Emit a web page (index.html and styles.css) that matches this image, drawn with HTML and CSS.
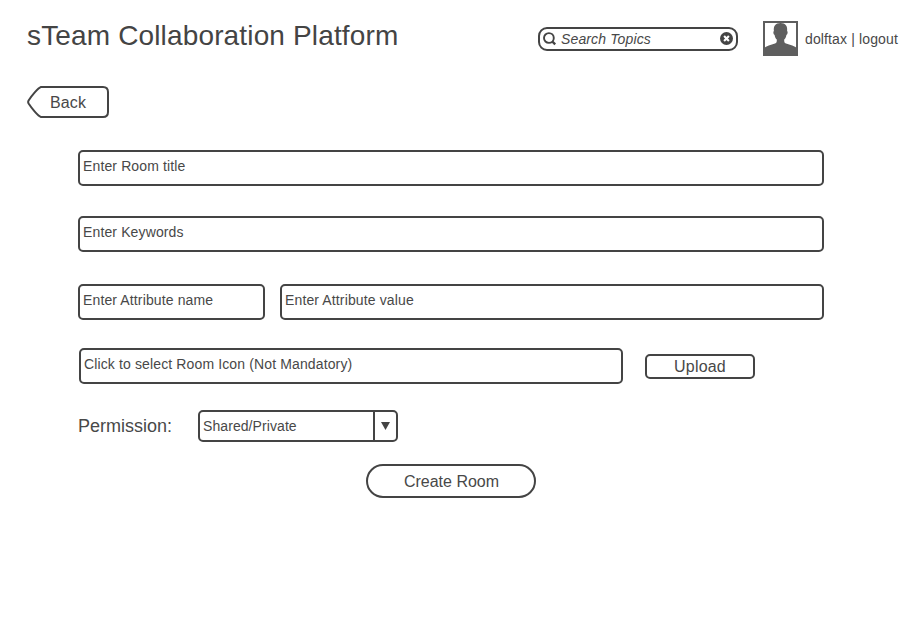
FILE: index.html
```html
<!DOCTYPE html>
<html lang="en">
<head>
<meta charset="utf-8">
<title>sTeam Collaboration Platform</title>
<link rel="stylesheet" href="styles.css">
</head>
<body>
<header class="header">
  <h1 class="title">sTeam Collaboration Platform</h1>
  <div class="search">
    <svg class="search-icon" width="14" height="14" viewBox="0 0 14 14"><circle cx="5.900" cy="6" r="4.900" fill="none" stroke="#444" stroke-width="1.900"/><path d="M9.400 9.600L12.200 12.400" stroke="#444" stroke-width="2.300"/></svg>
    <span class="search-text">Search Topics</span>
    <svg class="clear-icon" width="13" height="13" viewBox="0 0 13 13"><circle cx="6.500" cy="6.500" r="6.500" fill="#444"/><path d="M4.100 4.100L8.900 8.900M8.900 4.100L4.100 8.900" stroke="#fff" stroke-width="2.100"/></svg>
  </div>
  <svg class="avatar" width="35" height="35" viewBox="0 0 35 35"><path fill="#fff" stroke="#5e5e5e" stroke-width="2" d="M1 1H34V34H1Z"/><path fill="#5e5e5e" d="M1 34V27C3 25.500 8 23.800 12 22.600C13.600 22 13.900 21 13.800 18.500C12.600 17.500 12 16 11.600 14C10.300 13.500 9.900 10.500 10.900 10C10.200 5 12.500 2 17.500 2S24.800 5 24.100 10C25.100 10.500 24.700 13.500 23.400 14C23 16 22.400 17.500 21.200 18.500C21.100 21 21.400 22 23 22.600C27 23.800 32 25.500 34 27V34Z"/></svg>
  <nav class="account"><span>dolftax</span> | <span>logout</span></nav>
</header>
<div class="back">
  <svg class="back-shape" width="82" height="32" viewBox="0 0 82 32"><path d="M14 1H76Q81 1 81 6V26Q81 31 76 31H14C11 30 4.500 22 1.600 17.500Q.7 16 1.600 14.500C4.500 10 11 2 14 1Z" fill="#fff" stroke="#444" stroke-width="2"/></svg>
  <span class="back-label">Back</span>
</div>
<main class="form">
  <div class="field room-title">Enter Room title</div>
  <div class="field keywords">Enter Keywords</div>
  <div class="row attributes">
    <div class="field attribute-name">Enter Attribute name</div>
    <div class="field attribute-value">Enter Attribute value</div>
  </div>
  <div class="row icon-row">
    <div class="field icon-file">Click to select Room Icon (Not Mandatory)</div>
    <div class="upload">Upload</div>
  </div>
  <div class="row permission-row">
    <span class="permission">Permission:</span>
    <div class="select">
      <span class="select-value">Shared/Private</span>
      <span class="select-arrow"><svg width="9" height="8" viewBox="0 0 9 8"><path d="M0 0H9L4.500 8Z" fill="#444"/></svg></span>
    </div>
  </div>
  <div class="create">Create Room</div>
</main>
</body>
</html>
```
FILE: styles.css
```css
* { box-sizing: border-box; }
body {
  margin: 0;
  padding: 21px 0 0 27px;
  background: #fff;
  color: #484848;
  font: 14px/16px "Liberation Sans", Arial, sans-serif;
  letter-spacing: .13px;
}
.header { display: flex; height: 35px; }
.title {
  width: 511px;
  margin: -1px 0 0;
  color: #444;
  font-size: 28px;
  font-weight: 400;
  letter-spacing: .15px;
  line-height: 32px;
  white-space: nowrap;
}
.search {
  display: flex;
  align-items: center;
  width: 200px;
  height: 24px;
  margin-top: 6px;
  padding: 0 3px;
  border: 2px solid #444;
  border-radius: 9px;
}
.search-text { flex: 1; margin-left: 4px; font-style: italic; }
.clear-icon { margin-bottom: 1px; }
.avatar { margin-left: 25px; }
.account { margin: 10px 0 0 7px; white-space: nowrap; }
.back {
  display: grid;
  width: 82px;
  height: 32px;
  margin-top: 30px;
  font-size: 16px;
  line-height: 32px;
}
.back-shape, .back-label { grid-area: 1 / 1; }
.back-label { padding: 1px 0 0 23px; }
.form { width: 746px; margin: 32px 0 0 51px; }
.row { display: flex; }
.field {
  height: 36px;
  padding: 6px 3px;
  border: 2px solid #444;
  border-radius: 5px;
}
.keywords { margin-top: 30px; }
.attributes { gap: 15px; margin-top: 32px; }
.attribute-name { width: 187px; }
.attribute-value { flex: 1; }
.icon-row { align-items: center; margin: 28px 0 0 1px; }
.icon-file { width: 544px; }
.upload {
  width: 110px;
  height: 25px;
  margin: 1px 0 0 22px;
  border: 2px solid #444;
  border-radius: 5px;
  font-size: 16px;
  letter-spacing: .2px;
  line-height: 21px;
  text-align: center;
}
.permission-row { align-items: center; margin-top: 26px; }
.permission { width: 120px; font-size: 18px; letter-spacing: 0; line-height: 20px; }
.select {
  display: flex;
  width: 200px;
  height: 32px;
  border: 2px solid #444;
  border-radius: 5px;
  letter-spacing: .08px;
  line-height: 28px;
}
.select-value { flex: 1; padding-left: 3px; }
.select-arrow {
  display: flex;
  align-items: center;
  width: 23px;
  padding-left: 6px;
  border-left: 2px solid #444;
}
.create {
  width: 170px;
  height: 34px;
  margin: 22px 0 0 288px;
  padding: 1px 0 0 1px;
  border: 2px solid #444;
  border-radius: 17px;
  font-size: 16px;
  letter-spacing: 0;
  line-height: 30px;
  text-align: center;
}
```
